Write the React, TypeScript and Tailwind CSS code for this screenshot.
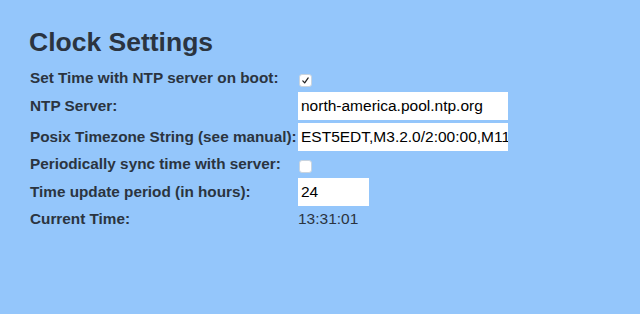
import React from 'react';

const labelCls = "font-bold text-[15.3px] text-[#2b3440] whitespace-nowrap w-[268px]";

const Checkbox = ({ checked }: { checked: boolean }) => (
    <div className="w-[13px] h-[13px] rounded-[3px] bg-white border border-[#c9d4df] flex items-center justify-center">
        {checked && (
            <svg width="9" height="9" viewBox="0 0 10 10">
                <path d="M2 5.4 L4.1 7.6 L8 2.2" fill="none" stroke="#222" strokeWidth="1.4" strokeLinecap="round" strokeLinejoin="round" />
            </svg>
        )}
    </div>
);

const TextBox = ({ value, width }: { value: string; width: string }) => (
    <input
        type="text"
        readOnly
        value={value}
        className={`${width} h-[28px] bg-white pl-[3px] text-[15.5px] text-black outline-none border-0`}
        style={{ fontFamily: '"Liberation Sans", Arial, sans-serif' }}
    />
);

const App = () => {
    return (
        <div className="w-[640px] h-[314px] bg-[#94c6fb] pl-[30px] pt-[24px]" style={{ fontFamily: '"Liberation Sans", Arial, sans-serif' }}>
            <h1 className="text-[26.5px] font-bold text-[#2b3440] leading-[36px] -ml-[1px]">Clock Settings</h1>
            <div className="mt-[7px] flex flex-col gap-[3px]">
                <div className="flex items-center h-[22px]">
                    <div className={labelCls}>Set Time with NTP server on boot:</div>
                    <div className="pl-[1px] mt-[5px]"><Checkbox checked={true} /></div>
                </div>
                <div className="flex items-center h-[28px]">
                    <div className={labelCls}>NTP Server:</div>
                    <TextBox value="north-america.pool.ntp.org" width="w-[210px]" />
                </div>
                <div className="flex items-center h-[28px]">
                    <div className={labelCls}>Posix Timezone String (see manual):</div>
                    <TextBox value="EST5EDT,M3.2.0/2:00:00,M11.1.0/2:00:00" width="w-[210px]" />
                </div>
                <div className="flex items-center h-[21px]">
                    <div className={labelCls}>Periodically sync time with server:</div>
                    <div className="pl-[1px] mt-[4px]"><Checkbox checked={false} /></div>
                </div>
                <div className="flex items-center h-[28px]">
                    <div className={labelCls}>Time update period (in hours):</div>
                    <TextBox value="24" width="w-[71px]" />
                </div>
                <div className="flex items-center h-[20px]">
                    <div className={labelCls}>Current Time:</div>
                    <div className="text-[15.5px] text-[#2b3440]">13:31:01</div>
                </div>
            </div>
        </div>
    );
};

export default App;
